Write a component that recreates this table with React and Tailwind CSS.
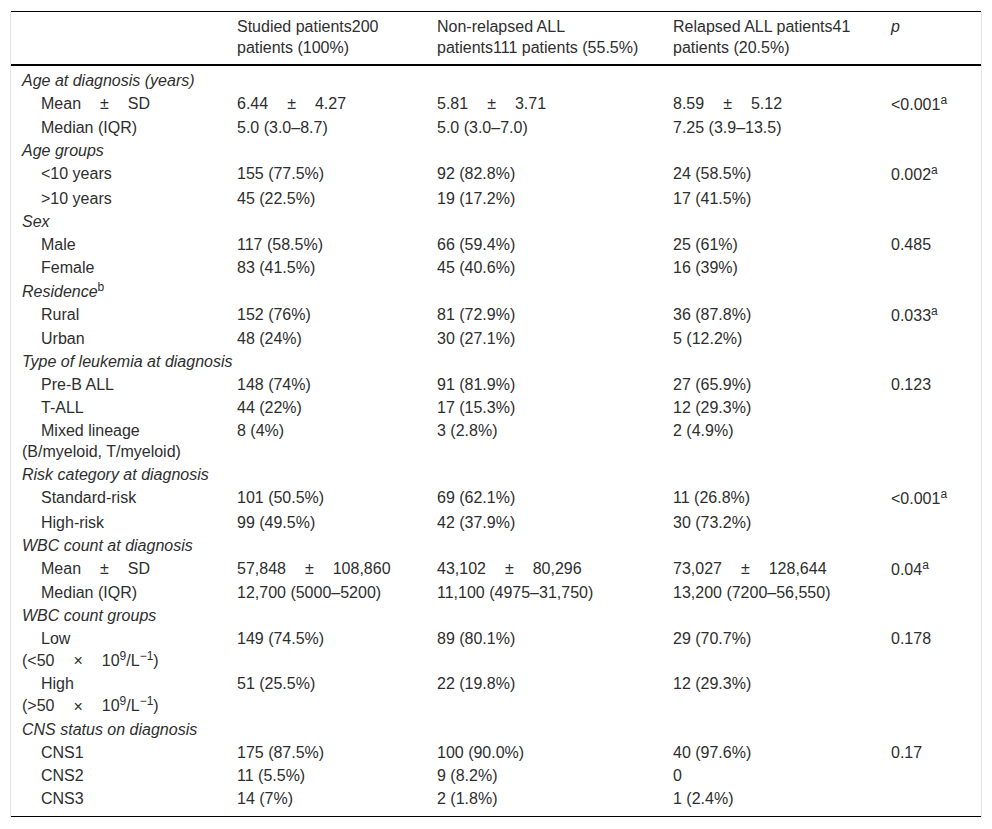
import React from 'react';

const Sup = ({ children }) => (
  <sup className="static align-super text-[12px] leading-[15px]">{children}</sup>
);

const Pm = ({ a, b, sign = '±' }) => (
  <>
    {a}
    <span className="mx-[19px]">{sign}</span>
    {b}
  </>
);

const rows = [
  { head: 'Age at diagnosis (years)' },
  { label: <Pm a="Mean" b="SD" />, vals: [<Pm a="6.44" b="4.27" />, <Pm a="5.81" b="3.71" />, <Pm a="8.59" b="5.12" />], p: <>&lt;0.001<Sup>a</Sup></> },
  { label: 'Median (IQR)', vals: ['5.0 (3.0–8.7)', '5.0 (3.0–7.0)', '7.25 (3.9–13.5)'] },
  { head: 'Age groups' },
  { label: '<10 years', vals: ['155 (77.5%)', '92 (82.8%)', '24 (58.5%)'], p: <>0.002<Sup>a</Sup></> },
  { label: '>10 years', vals: ['45 (22.5%)', '19 (17.2%)', '17 (41.5%)'] },
  { head: 'Sex' },
  { label: 'Male', vals: ['117 (58.5%)', '66 (59.4%)', '25 (61%)'], p: '0.485' },
  { label: 'Female', vals: ['83 (41.5%)', '45 (40.6%)', '16 (39%)'] },
  { head: <>Residence<span className="not-italic"><Sup>b</Sup></span></> },
  { label: 'Rural', vals: ['152 (76%)', '81 (72.9%)', '36 (87.8%)'], p: <>0.033<Sup>a</Sup></> },
  { label: 'Urban', vals: ['48 (24%)', '30 (27.1%)', '5 (12.2%)'] },
  { head: 'Type of leukemia at diagnosis' },
  { label: 'Pre-B ALL', vals: ['148 (74%)', '91 (81.9%)', '27 (65.9%)'], p: '0.123' },
  { label: 'T-ALL', vals: ['44 (22%)', '17 (15.3%)', '12 (29.3%)'] },
  { label: 'Mixed lineage', extra: '(B/myeloid, T/myeloid)', vals: ['8 (4%)', '3 (2.8%)', '2 (4.9%)'] },
  { head: 'Risk category at diagnosis' },
  { label: 'Standard-risk', vals: ['101 (50.5%)', '69 (62.1%)', '11 (26.8%)'], p: <>&lt;0.001<Sup>a</Sup></> },
  { label: 'High-risk', vals: ['99 (49.5%)', '42 (37.9%)', '30 (73.2%)'] },
  { head: 'WBC count at diagnosis' },
  { label: <Pm a="Mean" b="SD" />, vals: [<Pm a="57,848" b="108,860" />, <Pm a="43,102" b="80,296" />, <Pm a="73,027" b="128,644" />], p: <>0.04<Sup>a</Sup></> },
  { label: 'Median (IQR)', vals: ['12,700 (5000–5200)', '11,100 (4975–31,750)', '13,200 (7200–56,550)'] },
  { head: 'WBC count groups' },
  { label: 'Low', extra: <Pm sign="×" a="(<50" b={<>10<Sup>9</Sup>/L<Sup>−1</Sup>)</>} />, vals: ['149 (74.5%)', '89 (80.1%)', '29 (70.7%)'], p: '0.178' },
  { label: 'High', extra: <Pm sign="×" a="(>50" b={<>10<Sup>9</Sup>/L<Sup>−1</Sup>)</>} />, vals: ['51 (25.5%)', '22 (19.8%)', '12 (29.3%)'] },
  { head: 'CNS status on diagnosis' },
  { label: 'CNS1', vals: ['175 (87.5%)', '100 (90.0%)', '40 (97.6%)'], p: '0.17' },
  { label: 'CNS2', vals: ['11 (5.5%)', '9 (8.2%)', '0'] },
  { label: 'CNS3', vals: ['14 (7%)', '2 (1.8%)', '1 (2.4%)'] },
];

const App = () => {
  return (
    <div className="min-h-screen bg-white pt-[11px] pl-[10px] font-['Liberation_Sans',Arial,sans-serif]">
      <div className="w-[972px] border-x border-[#e5e5e5]">
        <table className="w-[970px] table-fixed border-collapse text-[16px] leading-[21px] text-[#2e2e2e]">
          <colgroup>
            <col className="w-[215px]" />
            <col className="w-[200px]" />
            <col className="w-[236px]" />
            <col className="w-[218px]" />
            <col className="w-[101px]" />
          </colgroup>
          <thead>
            <tr className="border-t border-b-2 border-black text-left align-top">
              <th className="px-[11px] pt-[4px] pb-[6px] font-normal"></th>
              <th className="px-[11px] pt-[4px] pb-[6px] font-normal">Studied patients200<br />patients (100%)</th>
              <th className="px-[11px] pt-[4px] pb-[6px] font-normal">Non-relapsed ALL<br />patients111 patients (55.5%)</th>
              <th className="px-[11px] pt-[4px] pb-[6px] font-normal">Relapsed ALL patients41<br />patients (20.5%)</th>
              <th className="px-[11px] pt-[4px] pb-[6px] font-normal italic">p</th>
            </tr>
          </thead>
          <tbody className="border-b border-black">
            {rows.map((r, i) => {
              const pad = i === 0 ? 'pt-[4px] pb-px' : i === rows.length - 1 ? 'pt-px pb-[7px]' : 'py-px';
              if (r.head) {
                return (
                  <tr key={i} className="align-top">
                    <td colSpan={5} className={`px-[11px] ${pad} italic`}>{r.head}</td>
                  </tr>
                );
              }
              return (
                <tr key={i} className="align-top">
                  <td className={`px-[11px] ${pad}`}>
                    <div className="pl-[19px]">{r.label}</div>
                    {r.extra && <div>{r.extra}</div>}
                  </td>
                  {r.vals.map((v, j) => (
                    <td key={j} className={`px-[11px] ${pad}`}>{v}</td>
                  ))}
                  <td className={`px-[11px] ${pad}`}>{r.p}</td>
                </tr>
              );
            })}
          </tbody>
        </table>
      </div>
    </div>
  );
};

export default App;
